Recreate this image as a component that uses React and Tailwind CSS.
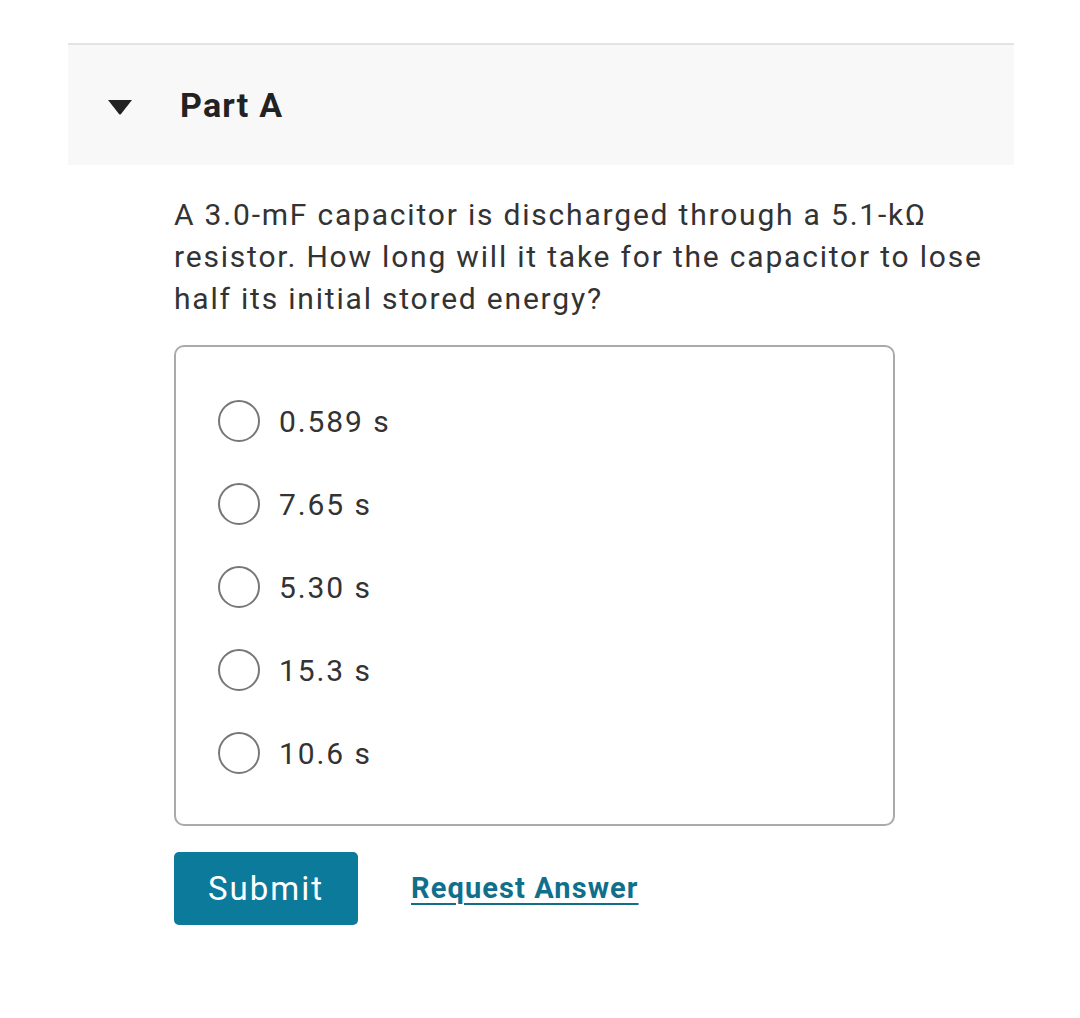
import { useState } from 'react'

const options = ['0.589 s', '7.65 s', '5.30 s', '15.3 s', '10.6 s']

function App() {
  const [picked, setPicked] = useState(null)

  return (
    <div className="min-h-[1018px] bg-white font-['Roboto',sans-serif] text-[#333]">
      <div className="pt-[43px] pl-[68px] pr-[66px]">
        {/* Part header */}
        <div className="border-t-2 border-[#e3e3e3] bg-[#f8f8f8] h-[122px] flex items-center">
          <svg width="26" height="16" viewBox="0 0 26 16" className="ml-[39px] mt-[4px]">
            <path d="M1 1 H25 L14 15 Q13 16 12 15 Z" fill="#222" />
          </svg>
          <h2 className="ml-[47px] text-[34px] font-bold tracking-[1.2px] text-[#222]">Part A</h2>
        </div>

        {/* Question */}
        <div className="pl-[106px] pt-[29px]">
          <p className="text-[30px] leading-[42px] tracking-[1.8px] text-[#333]">
            A 3.0-mF capacitor is discharged through a 5.1-kΩ resistor. How long will it take for the capacitor to lose half its initial stored energy?
          </p>

          <div className="mt-[25px] w-[721px] h-[481px] border-2 border-[#aaa] rounded-[10px] pt-[53px] pl-[42px] flex flex-col gap-[41px]">
            {options.map((o, i) => (
              <label key={o} className="flex items-center h-[42px] cursor-pointer" onClick={() => setPicked(i)}>
                <span className="w-[42px] h-[42px] rounded-full border-2 border-[#777] flex items-center justify-center">
                  {picked === i && <span className="w-[22px] h-[22px] rounded-full bg-[#0e7a9a]" />}
                </span>
                <span className="ml-[19px] text-[30px] tracking-[1.9px] text-[#333]">{o}</span>
              </label>
            ))}
          </div>

          <div className="mt-[26px] flex items-center">
            <button className="w-[184px] h-[73px] rounded-[5px] bg-[#0b7a9b] text-white text-[33px] tracking-[2px]">Submit</button>
            <a href="#" className="ml-[53px] text-[29px] font-bold tracking-[1.1px] text-[#0f6f8c] underline underline-offset-[5px] decoration-2">Request Answer</a>
          </div>
        </div>
      </div>
    </div>
  )
}

export default App
